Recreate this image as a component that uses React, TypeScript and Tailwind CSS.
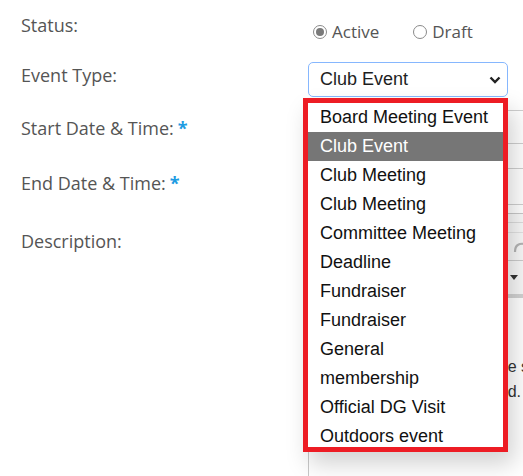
import React from "react";

const items = [
  "Board Meeting Event",
  "Club Event",
  "Club Meeting",
  "Club Meeting",
  "Committee Meeting",
  "Deadline",
  "Fundraiser",
  "Fundraiser",
  "General",
  "membership",
  "Official DG Visit",
  "Outdoors event",
];

function Label({ text, req, className }: { text: string; req?: boolean; className: string }) {
  return (
    <div className={"h-[24px] leading-[24px] whitespace-nowrap " + className}>
      {text}
      {req && <span className="text-[#1d9be2] ml-[4px] font-bold">*</span>}
    </div>
  );
}

export default function App() {
  return (
    <div className="relative w-[523px] h-[476px] overflow-hidden bg-white flex">
      {/* Left labels */}
      <div className="w-[308px] shrink-0 pl-[21px] text-[18px] text-[#555555] font-['Open_Sans',sans-serif] flex flex-col">
        <Label text="Status:" className="mt-[13px]" />
        <Label text="Event Type:" className="mt-[26px]" />
        <Label text="Start Date & Time:" req className="mt-[29px]" />
        <Label text="End Date & Time:" req className="mt-[31px]" />
        <Label text="Description:" className="mt-[34px]" />
      </div>

      {/* Right controls */}
      <div className="flex-1 min-w-0 flex flex-col">
        <div className="mt-[20px] h-[24px] flex items-center font-['Open_Sans',sans-serif] text-[17px] text-[#555555]">
          <span className="ml-[5px] w-[14px] h-[14px] rounded-full border border-[#8a8a8a] flex items-center justify-center">
            <span className="w-[8px] h-[8px] rounded-full bg-[#7a7a7a]" />
          </span>
          <span className="ml-[5px]">Active</span>
          <span className="ml-[34px] w-[14px] h-[14px] rounded-full border border-[#8a8a8a]" />
          <span className="ml-[5px]">Draft</span>
        </div>

        <div className="mt-[18px] w-[200px] h-[35px] shrink-0 rounded-[5px] border border-[#86b7fe] flex items-center pl-[11px] pr-[6px] font-['Liberation_Sans',Arial,sans-serif] text-[18px] text-[#1e1e1e]">
          <span className="flex-1">Club Event</span>
          <svg width="12" height="8" viewBox="0 0 12 8">
            <polyline points="1.5,1.5 6,6 10.5,1.5" fill="none" stroke="#222" strokeWidth="2.4" />
          </svg>
        </div>

        <div className="mt-[13px] w-[400px] h-[34px] shrink-0 border border-[#cfcfcf] rounded-[3px]" />
        <div className="mt-[24px] w-[400px] h-[37px] shrink-0 border border-[#cfcfcf] rounded-[3px]" />

        <div className="mt-[8px] w-[600px] shrink-0 border border-[#c8c8c8] flex flex-col font-['Liberation_Sans',Arial,sans-serif]">
          <div className="bg-[#f8f8f8] flex flex-col">
            <div className="h-[9px] border-b border-[#dcdcdc]" />
            <div className="h-[10px] border-b border-[#e2e2e2]" />
            <div className="h-[28px] border-b border-[#cccccc] flex items-center">
              <div className="w-[204px] shrink-0" />
              <svg width="14" height="14" viewBox="0 0 14 14">
                <path d="M2 12 C2 5 6 3 12 4" fill="none" stroke="#b5b5b5" strokeWidth="2.2" />
              </svg>
            </div>
            <div className="h-[33px] flex items-center">
              <div className="w-[201px] shrink-0" />
              <svg width="8" height="5" viewBox="0 0 8 5">
                <polygon points="0,0 8,0 4,5" fill="#333" />
              </svg>
            </div>
            <div className="h-[4px] bg-[#d2d2d2]" />
          </div>
          <div className="bg-white h-[200px] pt-[56px] text-[16px] leading-[25px] text-[#333]">
            <div className="w-[220px] flex justify-end whitespace-nowrap">
              <span>will be s</span>
            </div>
            <div className="w-[212px] flex justify-end whitespace-nowrap">
              <span>published.</span>
            </div>
          </div>
        </div>
      </div>

      {/* Open dropdown with red annotation outline */}
      <div className="absolute left-[303px] top-[98px] w-[205px] h-[354px] border-[5px] border-[#ed1c24] bg-white shadow-[6px_12px_22px_rgba(0,0,0,0.18)]">
        <div className="w-full h-full overflow-hidden font-['Liberation_Sans',Arial,sans-serif] text-[18px]">
          {items.map((it, i) => (
            <div
              key={i}
              className={
                "h-[29px] leading-[29px] pl-[12px] whitespace-nowrap " +
                (i === 1 ? "bg-[#767676] text-white" : "text-[#111]")
              }
            >
              {it}
            </div>
          ))}
        </div>
      </div>
    </div>
  );
}
